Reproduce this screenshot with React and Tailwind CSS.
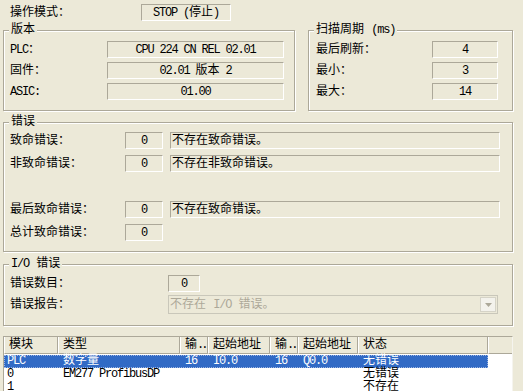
import React from 'react'

// sunken static field, like the read-only boxes of a classic dialog
const field = 'flex items-center h-[17px] border border-t-[#ACA899] border-l-[#ACA899] border-r-white border-b-white'

const M = ({ children }) => <span className="tracking-[-1.2px]">{children}</span>
const Dots = () => <span className="tracking-[-3px]">..</span>

function Group({ label, className, children }) {
    return (
        <div className={'border border-[#ACA899] shadow-[1px_1px_0_#fff,inset_1px_1px_0_#fff] ' + className}>
            <div className="-mt-[8px] ml-[5px] w-fit px-[2px] bg-[#ECE9D8] leading-[14px] whitespace-pre">{label}</div>
            {children}
        </div>
    )
}

function Row({ label, labelW, children }) {
    return (
        <div className="flex items-center h-[17px]">
            <div className={labelW}>{label}</div>
            {children}
        </div>
    )
}

const cols = ['w-[54px]', 'w-[122px]', 'w-[28px]', 'w-[62px]', 'w-[28px]', 'w-[60px]', 'w-[130px]']
const head = ['模块', '类型', <>输<Dots /></>, '起始地址', <>输<Dots /></>, '起始地址', '状态']
const rows = [
    { sel: true, cells: [<M>PLC</M>, '数字量', <M>16</M>, <M>I0.0</M>, <M>16</M>, <M>Q0.0</M>, '无错误'] },
    { cells: [<M>0</M>, <M>EM277 ProfibusDP</M>, '', '', '', '', '无错误'] },
    { cells: [<M>1</M>, '', '', '', '', '', '不存在'] },
]

export default function App() {
    return (
        <div className="w-[523px] h-[391px] overflow-hidden bg-[#ECE9D8] text-[12px] leading-[14px] text-black font-['Liberation_Mono','Noto_Sans_CJK_SC',monospace] pt-[4px]">
            {/* operating mode */}
            <div className="flex items-center h-[17px] pl-[10px]">
                <div className="w-[131px]">操作模式：</div>
                <div className={field + ' w-[90px] justify-center'}>
                    <span className="whitespace-pre"><M>STOP (</M>停止<M>)</M></span>
                </div>
            </div>

            <div className="flex items-start mt-[9px]">
                {/* version */}
                <Group label="版本" className="ml-[3px] w-[292px] h-[81px]">
                    <div className="flex flex-col gap-[4px] mt-[4px] pl-[6px]">
                        <Row label={<><M>PLC</M>：</>} labelW="w-[97px]">
                            <div className={field + ' w-[177px] justify-center'}><M>CPU 224 CN REL 02.01</M></div>
                        </Row>
                        <Row label="固件：" labelW="w-[97px]">
                            <div className={field + ' w-[177px] justify-center'}>
                                <span className="whitespace-pre"><M>02.01 </M>版本<M> 2</M></span>
                            </div>
                        </Row>
                        <Row label={<M>ASIC:</M>} labelW="w-[97px]">
                            <div className={field + ' w-[177px] justify-center'}><M>01.00</M></div>
                        </Row>
                    </div>
                </Group>

                {/* scan cycle */}
                <Group label={<>扫描周期 <M>(ms)</M></>} className="ml-[13px] w-[205px] h-[81px]">
                    <div className="flex flex-col gap-[4px] mt-[4px] pl-[7px]">
                        <Row label="最后刷新：" labelW="w-[116px]">
                            <div className={field + ' w-[66px] justify-center'}><M>4</M></div>
                        </Row>
                        <Row label="最小：" labelW="w-[116px]">
                            <div className={field + ' w-[66px] justify-center'}><M>3</M></div>
                        </Row>
                        <Row label="最大：" labelW="w-[116px]">
                            <div className={field + ' w-[66px] justify-center'}><M>14</M></div>
                        </Row>
                    </div>
                </Group>
            </div>

            {/* errors */}
            <Group label="错误" className="mt-[11px] ml-[3px] w-[510px] h-[130px]">
                <div className="flex flex-col gap-[6px] mt-[3px] pl-[6px]">
                    <Row label="致命错误：" labelW="w-[115px]">
                        <div className={field + ' w-[38px] justify-center'}><M>0</M></div>
                        <div className={field + ' ml-[7px] w-[330px] pl-[1px] border-t-[#808080] border-l-[#808080]'}>不存在致命错误。</div>
                    </Row>
                    <Row label="非致命错误：" labelW="w-[115px]">
                        <div className={field + ' w-[38px] justify-center'}><M>0</M></div>
                        <div className={field + ' ml-[7px] w-[330px] pl-[1px] border-t-[#808080] border-l-[#808080]'}>不存在非致命错误。</div>
                    </Row>
                    <div className="h-[17px]" />
                    <Row label="最后致命错误：" labelW="w-[115px]">
                        <div className={field + ' w-[38px] justify-center'}><M>0</M></div>
                        <div className={field + ' ml-[7px] w-[330px] pl-[1px] border-t-[#808080] border-l-[#808080]'}>不存在致命错误。</div>
                    </Row>
                    <Row label="总计致命错误：" labelW="w-[115px]">
                        <div className={field + ' w-[38px] justify-center'}><M>0</M></div>
                    </Row>
                </div>
            </Group>

            {/* I/O errors */}
            <Group label={<><M>I/O</M> 错误</>} className="mt-[12px] ml-[3px] w-[510px] h-[62px]">
                <div className="flex flex-col gap-[3px] mt-[4px] pl-[6px]">
                    <Row label="错误数目：" labelW="w-[158px]">
                        <div className={field + ' w-[32px] justify-center'}><M>0</M></div>
                    </Row>
                    <div className="flex items-center h-[19px]">
                        <div className="w-[158px]">错误报告：</div>
                        <div className="flex items-center justify-between w-[330px] h-[19px] pl-[1px] pr-[1px] border border-[#C9C7BA] text-[#ACA899]">
                            <span className="whitespace-pre">不存在 <M>I/O</M> 错误。</span>
                            <div className="flex items-center justify-center w-[16px] h-[15px] border border-[#D5D3C7] bg-[#F3F2EC]">
                                <svg width="7" height="4" viewBox="0 0 7 4"><path d="M0 0h7L3.5 4z" fill="#ACA899" /></svg>
                            </div>
                        </div>
                    </div>
                </div>
            </Group>

            {/* module list */}
            <div className="mt-[10px] ml-[3px] w-[510px] h-[60px] bg-white border border-[#ACA899] border-r-[#F5F4EE]">
                <div className="flex h-[17px] bg-[#ECE9D8]">
                    {head.map((h, i) => (
                        <div key={i} className={cols[i] + ' h-[17px] flex items-center pl-[4px] border-l border-l-white border-r border-r-[#ACA899] border-b border-b-[#ACA899] whitespace-nowrap'}>{h}</div>
                    ))}
                    <div className="flex-1 border-l border-l-white border-b border-b-[#ACA899]" />
                </div>
                <div className="mt-[1px] flex flex-col">
                    {rows.map((r, j) => (
                        <div key={j} className={'flex w-[484px] h-[13px] leading-[13px] ' + (r.sel ? 'bg-[#316AC5] text-white outline outline-1 outline-dotted outline-[#9DB5E2] -outline-offset-1' : '')}>
                            {r.cells.map((c, i) => (
                                <div key={i} className={cols[i] + ' whitespace-nowrap ' + (i === 0 ? 'pl-[3px]' : 'pl-[5px]')}>{c}</div>
                            ))}
                        </div>
                    ))}
                </div>
            </div>
        </div>
    )
}
